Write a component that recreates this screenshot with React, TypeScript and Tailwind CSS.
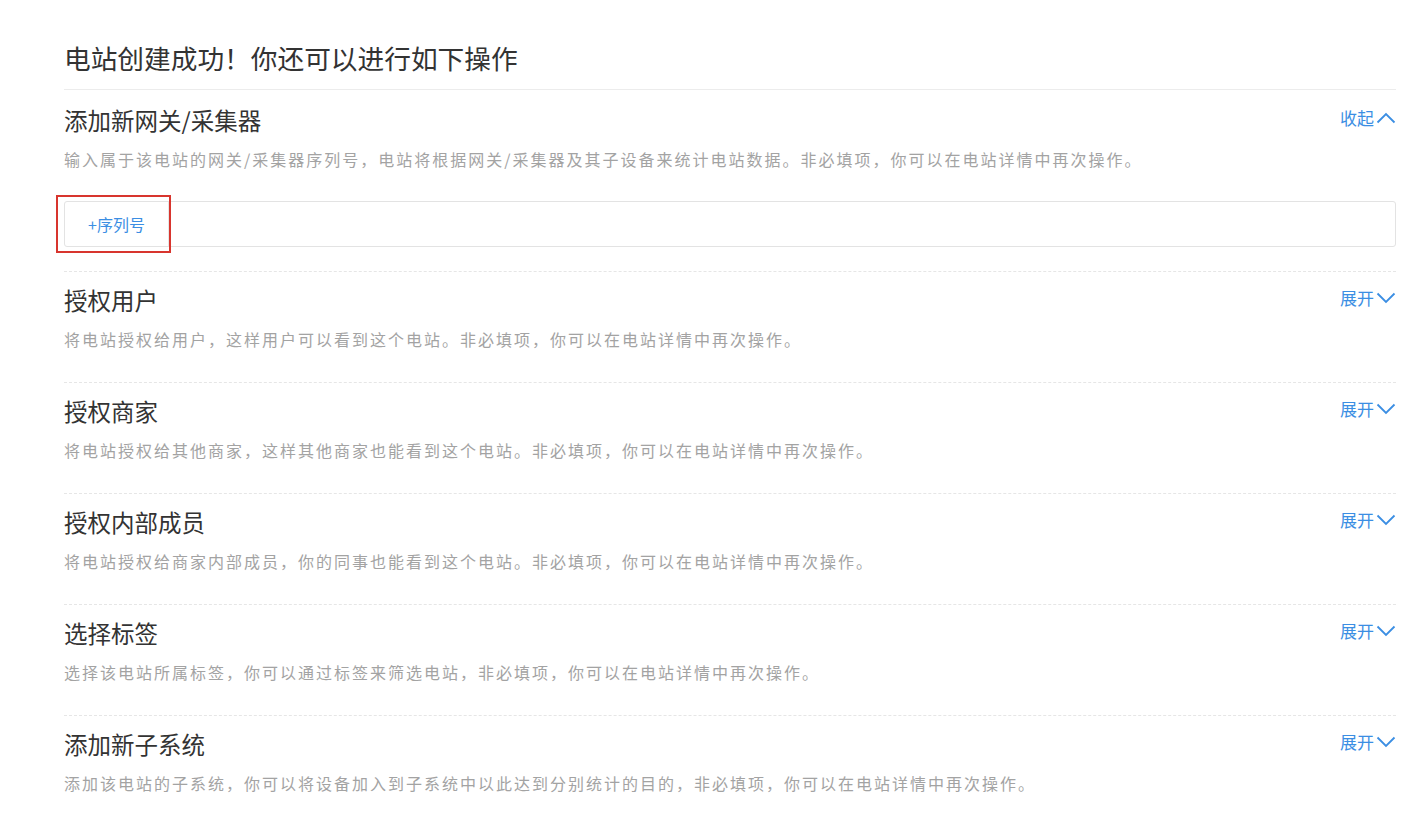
import React from 'react';

const sections = [
  {
    title: '授权用户',
    desc: '将电站授权给用户，这样用户可以看到这个电站。非必填项，你可以在电站详情中再次操作。',
  },
  {
    title: '授权商家',
    desc: '将电站授权给其他商家，这样其他商家也能看到这个电站。非必填项，你可以在电站详情中再次操作。',
  },
  {
    title: '授权内部成员',
    desc: '将电站授权给商家内部成员，你的同事也能看到这个电站。非必填项，你可以在电站详情中再次操作。',
  },
  {
    title: '选择标签',
    desc: '选择该电站所属标签，你可以通过标签来筛选电站，非必填项，你可以在电站详情中再次操作。',
  },
  {
    title: '添加新子系统',
    desc: '添加该电站的子系统，你可以将设备加入到子系统中以此达到分别统计的目的，非必填项，你可以在电站详情中再次操作。',
  },
];

const Chevron = ({ up }: { up?: boolean }) => (
  <svg width="20" height="12" viewBox="0 0 20 12" className="ml-[2px]">
    <polyline
      points={up ? '1.5,10.5 10,2 18.5,10.5' : '1.5,1.5 10,10 18.5,1.5'}
      fill="none"
      stroke="currentColor"
      strokeWidth="1.8"
    />
  </svg>
);

const Toggle = ({ open }: { open?: boolean }) => (
  <button className="flex items-center text-[17px] leading-[22px] text-[#3b8ee3] mt-[2px]">
    {open ? '收起' : '展开'}
    <Chevron up={open} />
  </button>
);

const Header = ({ title, desc, open }: { title: string; desc: string; open?: boolean }) => (
  <>
    <div className="flex justify-between items-start">
      <h2 className="text-[23.5px] leading-[30px] text-[#333]">{title}</h2>
      <Toggle open={open} />
    </div>
    <p className="mt-[12px] text-[16px] leading-[24px] tracking-[2px] text-[#a3a3a3]">{desc}</p>
  </>
);

export default function App() {
  return (
    <div
      className="min-h-screen bg-white pl-16 pr-[26px] pt-[40px]"
      style={{ fontFamily: '"Noto Sans CJK SC", "Noto Sans", sans-serif' }}
    >
      <h1 className="text-[26.7px] leading-[36px] text-[#333]">电站创建成功！你还可以进行如下操作</h1>
      <div className="mt-[13px] border-t border-[#ececec]" />

      <div className="pt-[15px] pb-[24px]">
        <Header
          title="添加新网关/采集器"
          desc="输入属于该电站的网关/采集器序列号，电站将根据网关/采集器及其子设备来统计电站数据。非必填项，你可以在电站详情中再次操作。"
          open
        />
        <div className="relative mt-[30px] h-[46px] border border-[#e3e3e3] rounded-[3px] flex">
          <button className="w-[104px] h-full border-r border-[#e6e6e6] text-[16px] text-[#3b8ee3] flex items-center justify-center">
            +序列号
          </button>
          <div className="absolute -left-[9px] -top-[7px] w-[115px] h-[58px] border-2 border-[#d8352e]" />
        </div>
      </div>

      {sections.map((s) => (
        <div key={s.title} className="border-t border-dashed border-[#e6e6e6] pt-[13px] pb-[31px]">
          <Header title={s.title} desc={s.desc} />
        </div>
      ))}
    </div>
  );
}
